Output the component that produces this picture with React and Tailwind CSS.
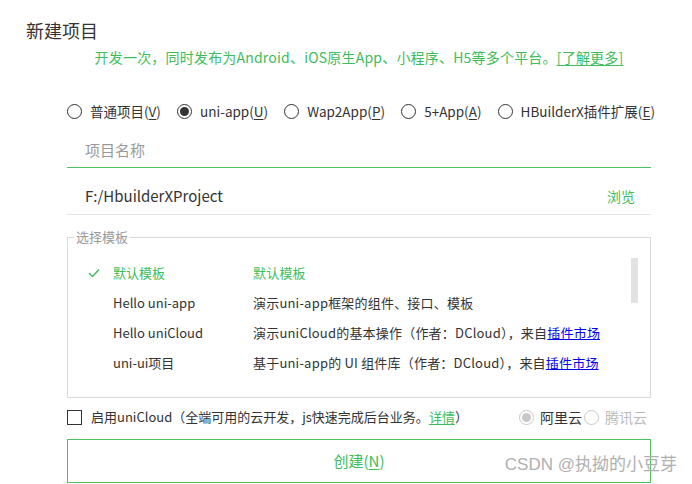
import React from 'react';

const Radio = ({ checked, muted }) => (
  <span
    className={`w-[15px] h-[15px] rounded-full border flex items-center justify-center shrink-0 bg-white ${
      muted ? 'border-[#c8c8c8]' : 'border-[#333]'
    }`}
  >
    {checked && <span className={`w-[9px] h-[9px] rounded-full ${muted ? 'bg-[#c8c8c8]' : 'bg-[#333]'}`} />}
  </span>
);

const Key = ({ k }) => (
  <>
    (<span className="underline underline-offset-2">{k}</span>)
  </>
);

const App = () => {
  const types = [
    { label: '普通项目', k: 'V' },
    { label: 'uni-app', k: 'U', checked: true },
    { label: 'Wap2App', k: 'P' },
    { label: '5+App', k: 'A' },
    { label: 'HBuilderX插件扩展', k: 'E' },
  ];

  const templates = [
    { name: '默认模板', desc: '默认模板', active: true },
    { name: 'Hello uni-app', desc: '演示uni-app框架的组件、接口、模板' },
    { name: 'Hello uniCloud', desc: '演示uniCloud的基本操作（作者：DCloud），来自', link: '插件市场' },
    { name: 'uni-ui项目', desc: '基于uni-app的 UI 组件库（作者：DCloud），来自', link: '插件市场' },
  ];

  return (
    <div
      className="relative w-[692px] h-[484px] bg-white overflow-hidden text-[#333]"
      style={{ fontFamily: '"Microsoft YaHei", "Noto Sans CJK SC", "Noto Sans", sans-serif' }}
    >
      <div className="pt-[19px] pl-[26px] text-[18px] leading-[22px]">新建项目</div>

      <div className="ml-[67px] w-[584px]">
        <div className="mt-[6px] text-center text-[14px] leading-[20px] tracking-[0.2px] text-[#3dbd5c]">
          开发一次，同时发布为Android、iOS原生App、小程序、H5等多个平台。
          <span className="underline underline-offset-2">[了解更多]</span>
        </div>

        <div className="mt-[34px] w-[588px] flex justify-between items-center text-[13.5px] leading-[20px]">
          {types.map((t) => (
            <div key={t.k} className="flex items-center gap-[8px]">
              <Radio checked={t.checked} />
              <span>
                {t.label}
                <Key k={t.k} />
              </span>
            </div>
          ))}
        </div>

        <div className="mt-[19px] h-[28px] pl-[18px] border-b border-[#4cc35f] text-[15px] leading-[20px] text-[#999]">
          项目名称
        </div>

        <div className="pt-[18px] pb-[8px] pl-[18px] pr-[16px] flex justify-between border-b border-[#e6e6e6] text-[15px] leading-[20px]">
          <span>F:/HbuilderXProject</span>
          <span className="text-[#3dbd5c] text-[14px]">浏览</span>
        </div>

        <fieldset className="mt-[14px] border border-[#d9d9d9]">
          <legend className="ml-[6px] px-[2px] text-[13px] leading-[16px] text-[#999]">选择模板</legend>
          <div className="relative pt-[13px] pb-[19px] text-[13px] leading-[30px]">
            {templates.map((t) => (
              <div key={t.name} className={`grid grid-cols-[45px_140px_1fr] ${t.active ? 'text-[#3dbd5c]' : ''}`}>
                <span className="pl-[20px] flex items-center">
                  {t.active && (
                    <svg width="12" height="10" viewBox="0 0 12 10" fill="none" stroke="#3dbd5c" strokeWidth="1.4">
                      <polyline points="1,5 4.5,8.5 11,1.5" />
                    </svg>
                  )}
                </span>
                <span>{t.name}</span>
                <span className="tracking-[0.2px]">
                  {t.desc}
                  {t.link && <span className="text-[#0000ee] underline">{t.link}</span>}
                </span>
              </div>
            ))}
            <div className="absolute top-[13px] right-[12px] w-[7px] h-[45px] bg-[#e2e2e2]" />
          </div>
        </fieldset>

        <div className="mt-[9px] flex items-center justify-between text-[13px] leading-[20px]">
          <div className="flex items-center">
            <span className="w-[15px] h-[15px] border border-[#333] shrink-0" />
            <span className="ml-[9px]">
              启用uniCloud（全端可用的云开发，js快速完成后台业务。
              <span className="text-[#3dbd5c] underline underline-offset-2">详情</span>）
            </span>
          </div>
          <div className="flex items-center text-[14px] mr-[4px]">
            <Radio checked muted />
            <span className="ml-[6px]">阿里云</span>
            <span className="ml-[2px]">
              <Radio muted />
            </span>
            <span className="ml-[6px] text-[#bbb]">腾讯云</span>
          </div>
        </div>

        <button className="mt-[12px] w-[584px] h-[44px] border border-[#4cc35f] text-[#3dbd5c] text-[15px] bg-white">
          创建
          <Key k="N" />
        </button>
      </div>

      <div
        className="absolute right-[15px] top-[453px] text-[17px] leading-[24px] text-[#b0b0b0]"
        style={{ fontFamily: '"Liberation Sans", "Noto Sans CJK SC", sans-serif' }}
      >
        CSDN @执拗的小豆芽
      </div>
    </div>
  );
};

export default App;
